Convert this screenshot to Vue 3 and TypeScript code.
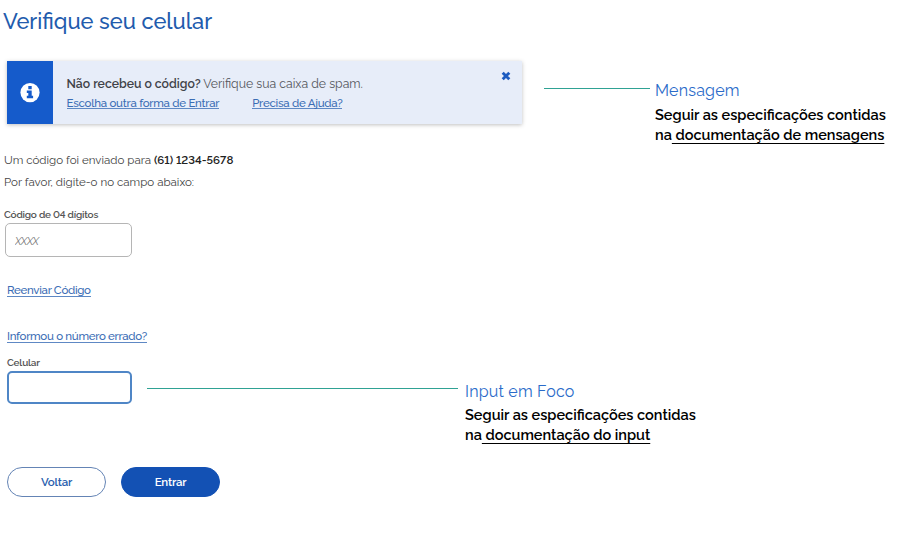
<script setup lang="ts">
import { ref } from 'vue'

const code = ref<string>('')
const phone = ref<string>('')
const showMessage = ref<boolean>(true)
</script>

<template>
  <main class="page">
    <h1 class="title">Verifique seu celular</h1>

    <div class="row message-row">
      <section v-if="showMessage" class="message">
        <div class="message-icon">
          <svg width="20" height="20" viewBox="0 0 20 20">
            <circle cx="10" cy="9.6" r="9.6" fill="#fff" />
            <path fill="#155bcb" d="M8.3 3h3.4v3.2H8.3zM6.8 7.6h4.9v5.2h1.4v2.4H6.8v-2.4h1.5V9.9H6.8z" />
          </svg>
        </div>
        <div class="message-body">
          <p class="message-text"><strong>Não recebeu o código?</strong><span> Verifique sua caixa de spam.</span></p>
          <div class="message-links">
            <a class="link">Escolha outra forma de Entrar</a>
            <a class="link">Precisa de Ajuda?</a>
          </div>
        </div>
        <button class="close" aria-label="Fechar" @click="showMessage = false">
          <svg width="10" height="10" viewBox="0 0 10 10">
            <path d="M1.7 1.7l6.6 6.6M8.3 1.7l-6.6 6.6" stroke="#1c5bc0" stroke-width="2.9" />
          </svg>
        </button>
      </section>
      <i class="connector connector-message"></i>
      <aside class="note">
        <h2 class="note-title">Mensagem</h2>
        <p class="note-text">Seguir as especificações contidas</p>
        <p class="note-text">na<u>&nbsp;documentação de mensagens</u></p>
      </aside>
    </div>

    <div class="intro">
      <p>Um código foi enviado para <b>(61) 1234-5678</b></p>
      <p>Por favor, digite-o no campo abaixo:</p>
    </div>

    <label class="label label-code" for="code">Código de 04 dígitos</label>
    <input id="code" v-model="code" class="field field-code" placeholder="XXXX" />

    <a class="link link-resend">Reenviar Código</a>
    <a class="link link-wrong">Informou o número errado?</a>

    <div class="row phone-row">
      <div class="phone">
        <label class="label" for="phone">Celular</label>
        <input id="phone" v-model="phone" class="field field-phone" />
      </div>
      <i class="connector connector-input"></i>
      <aside class="note note-input">
        <h2 class="note-title">Input em Foco</h2>
        <p class="note-text">Seguir as especificações contidas</p>
        <p class="note-text">na<u>&nbsp;documentação do input</u></p>
      </aside>
    </div>

    <div class="actions">
      <button class="button">Voltar</button>
      <button class="button primary">Entrar</button>
    </div>
  </main>
</template>

<style>
body {
  background: #fff;
}
</style>

<style scoped>
.page {
  box-sizing: border-box;
  display: flex;
  flex-direction: column;
  align-items: flex-start;
  width: 921px;
  height: 538px;
  padding: 5px 0 0 4px;
  overflow: hidden;
  font-family: Raleway, Lato, 'Open Sans', sans-serif;
  font-variant-numeric: lining-nums;
  white-space: nowrap;
}
h1, h2, p {
  margin: 0;
}
.title {
  height: 32px;
  margin-left: -1px;
  line-height: 32px;
  font-size: 21.9px;
  font-weight: 500;
  color: #225bad;
}
.row {
  display: flex;
  align-items: flex-start;
}
.message-row {
  height: 63px;
  margin: 24px 0 0 3px;
}
.message {
  display: flex;
  width: 515px;
  height: 63px;
  background: #e7edf9;
  box-shadow: 0 1px 4px rgba(0, 0, 0, 0.25);
}
.message-icon {
  display: flex;
  align-items: center;
  justify-content: center;
  width: 46px;
  background: #155bcb;
}
.message-body {
  flex: 1;
  padding: 13px 0 0 13.5px;
}
.message-text {
  height: 20px;
  line-height: 20px;
  font-size: 12.25px;
  color: #55575d;
}
.message-text strong {
  font-weight: 600;
  color: #404248;
}
.message-links {
  display: flex;
  gap: 33px;
}
.link {
  height: 14px;
  line-height: 18px;
  font-size: 11.5px;
  font-weight: 500;
  letter-spacing: -0.27px;
  color: #3b6db5;
  border-bottom: 1px solid #5e88c4;
}
.close {
  display: flex;
  width: 10px;
  height: 10px;
  margin: 10px 11px 0 0;
  padding: 0;
  border: 0;
  background: none;
}
.connector {
  height: 1px;
  background: #2fa294;
}
.connector-message {
  width: 106px;
  margin: 27px 5px 0 22px;
}
.note {
  padding-top: 20px;
}
.note-title {
  height: 20px;
  margin-bottom: 4px;
  line-height: 20px;
  font-size: 16px;
  font-weight: 400;
  color: #2a6bc9;
  letter-spacing: 0.2px;
}
.note-text {
  height: 20px;
  line-height: 20px;
  font-size: 14.52px;
  font-weight: 600;
  color: #000;
}
.note-text u {
  text-decoration-thickness: 1px;
  text-underline-offset: 3px;
}
.intro {
  margin-top: 25px;
  font-size: 11.55px;
  line-height: 22px;
  color: #444;
}
.intro b {
  font-weight: 600;
  color: #222;
}
.label {
  display: block;
  height: 12px;
  line-height: 12px;
  font-size: 10px;
  font-weight: 600;
  letter-spacing: -0.22px;
  color: #555;
}
.label-code {
  margin-top: 16px;
}
.field {
  box-sizing: border-box;
  display: block;
  border-radius: 5px;
  background: #fff;
  outline: none;
}
.field-code {
  width: 127px;
  height: 34px;
  margin: 2px 0 0 1px;
  padding: 2px 9px 0;
  border: 1px solid #b5b5b5;
  font: italic 10.5px Raleway, Lato, sans-serif;
  letter-spacing: -0.5px;
}
.field-code::placeholder {
  color: #777;
}
.link-resend {
  margin: 25px 0 0 3px;
}
.link-wrong {
  margin: 31px 0 0 3px;
}
.link-resend,
.link-wrong {
  line-height: 16px;
  letter-spacing: -0.31px;
}
.phone-row {
  height: 48px;
  margin: 14px 0 0 3px;
}
.phone {
  width: 125px;
}
.field-phone {
  width: 125px;
  height: 33px;
  margin-top: 2px;
  border: 2px solid #4f86c6;
}
.connector-input {
  width: 311px;
  margin: 31px 7px 0 15px;
}
.note-input {
  padding-top: 25px;
}
.note-input .note-title {
  margin-bottom: 3px;
}
.actions {
  display: flex;
  gap: 15px;
  margin: 62px 0 0 3px;
}
.button {
  box-sizing: border-box;
  width: 99px;
  height: 30px;
  padding: 0;
  border: 1px solid #6484b5;
  border-radius: 15px;
  background: #fff;
  color: #2a5fae;
  font: 600 11.5px Raleway, Lato, sans-serif;
  letter-spacing: -0.25px;
}
.primary {
  border-color: #1351b4;
  background: #1351b4;
  color: #fff;
}
</style>
